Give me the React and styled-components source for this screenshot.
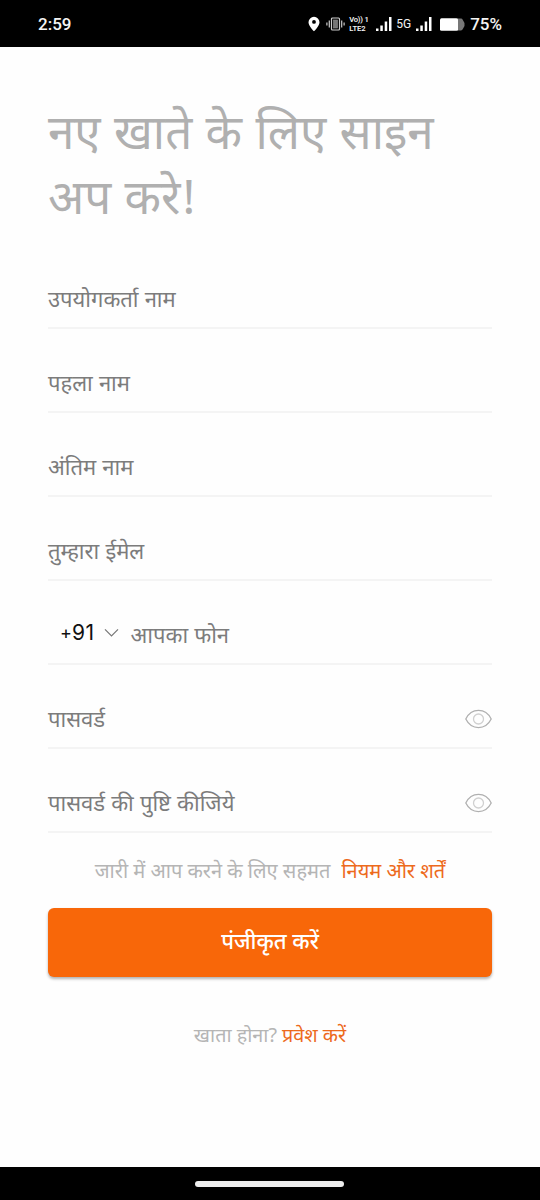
import React from 'react';
import styled, { createGlobalStyle } from 'styled-components';

const Global = createGlobalStyle`
  * { box-sizing: border-box; }
  body { margin: 0; background: #fff; font-family: "Noto Sans", "Noto Sans Devanagari", sans-serif; }
`;
const Screen = styled.div`
  width: 540px;
  height: 1200px;
  display: flex;
  flex-direction: column;
  background: #fefefe;
  overflow: hidden;
`;
const StatusBar = styled.header`
  height: 47px;
  flex: none;
  background: #000;
  color: #f4f4f4;
  display: flex;
  align-items: center;
  justify-content: space-between;
  padding: 1px 38px 0;
  font: 500 17px Roboto, sans-serif;
`;
const StatusIcons = styled.div`
  display: flex;
  align-items: center;
  svg { display: block; }
`;
const Lte = styled.span`
  width: 20px;
  margin: 0 7px 0 4px;
  display: flex;
  flex-direction: column;
  font: 600 7.6px/9px Roboto, sans-serif;
  white-space: nowrap;
`;
const Volte = styled.span`
  letter-spacing: -0.2px;
`;
const Network = styled.span`
  width: 15px;
  margin: 0 5px 0 4px;
  font: 400 12px/16px Roboto, sans-serif;
`;
const Percent = styled.span`
  margin-left: 5px;
`;
const Main = styled.main`
  flex: 1;
  padding: 51px 48px 0;
  display: flex;
  flex-direction: column;
`;
const Title = styled.h1`
  margin: 0 0 17px;
  font-size: 47.5px;
  font-weight: 400;
  line-height: 65px;
  word-spacing: 1px;
  color: #b0b0b0;
  white-space: nowrap;
`;
const Bang = styled.span`
  margin-left: 2px;
`;
const Form = styled.form`
  display: flex;
  flex-direction: column;
`;
const Field = styled.label`
  height: 84px;
  padding-bottom: 14px;
  border-bottom: 2px solid #f4f4f4;
  display: flex;
  align-items: flex-end;
  font-size: 22px;
  line-height: 30px;
  word-spacing: 0.4px;
  color: #7c7c7c;
`;
const Label = styled.span`
  flex: 1;
`;
const DialCode = styled.span`
  width: 82.5px;
  height: 32px;
  padding-left: 12px;
  display: flex;
  align-items: center;
  font: 400 21px/32px Inter, sans-serif;
  letter-spacing: 0.6px;
  color: #111;
`;
const Plus = styled.span`
  width: 12px;
  font-size: 18px;
`;
const Number = styled.span`
  width: 32px;
`;
const EyeSlot = styled.span`
  height: 29px;
  display: flex;
  align-items: center;
`;
const Terms = styled.p`
  margin: 22px 0 0;
  height: 32px;
  display: flex;
  justify-content: center;
  gap: 11px;
  font-size: 20px;
  line-height: 32px;
  color: #b5b5b5;
  white-space: nowrap;
`;
const Link = styled.a`
  color: #ed6a1c;
`;
const Submit = styled.button`
  margin-top: 21px;
  height: 69px;
  padding: 0 0 5px;
  border: 0;
  border-radius: 6px;
  background: #f86709;
  box-shadow: 0 2px 3px rgba(0, 0, 0, 0.3);
  color: #fff;
  font-family: inherit;
  font-weight: 500;
  font-size: 22px;
`;
const Footer = styled.p`
  margin: 42px 0 0;
  display: flex;
  justify-content: center;
  gap: 5px;
  font-size: 19.8px;
  line-height: 32px;
  color: #b5b5b5;
`;
const NavBar = styled.footer`
  height: 33px;
  flex: none;
  padding-right: 1px;
  background: #000;
  display: flex;
  justify-content: center;
  align-items: center;
`;
const HomePill = styled.div`
  width: 149px;
  height: 6px;
  border-radius: 3px;
  background: #eee;
`;

const Pin = () => (
  <svg width="12" height="16" viewBox="0 0 12 16">
    <path d="M6 .8A5.500 5.500 0 0 0 .5 6.200C.5 9.800 6 15.300 6 15.300s5.500-5.500 5.500-9.100A5.500 5.500 0 0 0 6 .8Zm0 7A1.900 1.900 0 1 1 6 4a1.900 1.900 0 0 1 0 3.800Z" fill="#fff" />
  </svg>
);
const VibrateSvg = styled.svg`
  margin-left: 6px;
`;
const Vibrate = () => (
  <VibrateSvg width="19" height="14" viewBox="0 0 19 14" fill="none" stroke="#ccc">
    <path d="M.9 5.500v3M3.300 3.500v7M15.700 3.500v7M18.100 5.500v3" strokeWidth="1.200" />
    <rect x="5.500" y="1" width="8" height="12" rx="1" strokeWidth="1.200" />
    <rect x="7.500" y="3" width="4" height="8" fill="#777" stroke="#888" strokeWidth=".7" />
  </VibrateSvg>
);
const Signal = () => (
  <svg width="16" height="15" viewBox="0 0 16 15" fill="#fff">
    <rect x="0" y="11.500" width="2.500" height="2.500" />
    <rect x="4.300" y="8.500" width="2.500" height="5.500" />
    <rect x="8.700" y="4.500" width="2.500" height="9.500" />
    <rect x="13" y="0" width="2.500" height="14" />
  </svg>
);
const BatterySvg = styled.svg`
  margin-left: 8px;
`;
const Battery = () => (
  <BatterySvg width="25" height="13" viewBox="0 0 25 13">
    <path d="M17 .5h4a2 2 0 0 1 1.700 1.200L24.500 5v3l-1.800 3.300A2 2 0 0 1 21 12.500h-4Z" fill="#777" />
    <rect x="0" y=".3" width="18" height="12.400" rx="1.500" fill="#fff" />
  </BatterySvg>
);
const Chevron = () => (
  <svg width="15" height="10" viewBox="0 0 15 10" fill="none" stroke="#777" strokeWidth="1.200">
    <path d="m1 1.300 6.500 6.700L14 1.300" />
  </svg>
);
const Eye = () => (
  <EyeSlot>
    <svg width="27" height="20" viewBox="0 0 27 20" fill="none">
      <path d="M.8 10C6.500-1.400 20.500-1.400 26.200 10 20.500 21.400 6.500 21.400.8 10Z" stroke="#b0b0b0" strokeWidth="1.300" />
      <circle cx="13.500" cy="10" r="5" stroke="#d0d0d0" strokeWidth="1.300" />
    </svg>
  </EyeSlot>
);

export default function App() {
  return (
    <>
      <Global />
      <Screen>
        <StatusBar>
          <span>2:59</span>
          <StatusIcons>
            <Pin />
            <Vibrate />
            <Lte><Volte>Vo)) 1</Volte><span>LTE2</span></Lte>
            <Signal />
            <Network>5G</Network>
            <Signal />
            <Battery />
            <Percent>75%</Percent>
          </StatusIcons>
        </StatusBar>
        <Main>
          <Title>नए खाते के लिए साइन<br />अप करे<Bang>!</Bang></Title>
          <Form>
            <Field><Label>उपयोगकर्ता नाम</Label></Field>
            <Field><Label>पहला नाम</Label></Field>
            <Field><Label>अंतिम नाम</Label></Field>
            <Field><Label>तुम्हारा ईमेल</Label></Field>
            <Field>
              <DialCode><Plus>+</Plus><Number>91</Number><Chevron /></DialCode>
              <Label>आपका फोन</Label>
            </Field>
            <Field><Label>पासवर्ड</Label><Eye /></Field>
            <Field><Label>पासवर्ड की पुष्टि कीजिये</Label><Eye /></Field>
            <Terms><span>जारी में आप करने के लिए सहमत</span><Link>नियम और शर्तें</Link></Terms>
            <Submit type="button">पंजीकृत करें</Submit>
            <Footer><span>खाता होना?</span><Link>प्रवेश करें</Link></Footer>
          </Form>
        </Main>
        <NavBar><HomePill /></NavBar>
      </Screen>
    </>
  );
}
